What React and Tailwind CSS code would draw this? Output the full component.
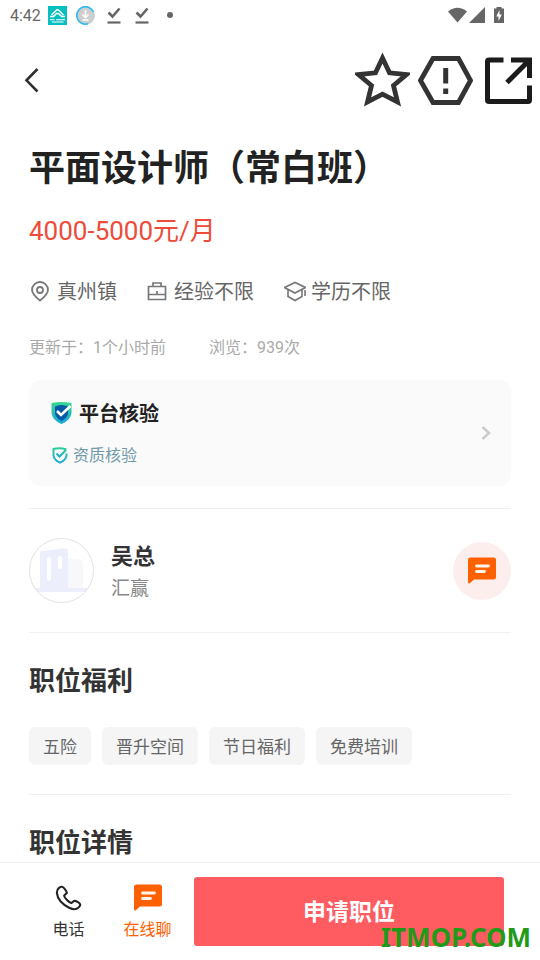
import React from 'react';

const perks = ['五险', '晋升空间', '节日福利', '免费培训'];

function ChatIcon() {
  return (
    <svg className="h-[27px] w-7" viewBox="0 0 28 27" aria-hidden="true">
      <path d="M2.5 0.5H25.5Q28 0.5 28 3V20Q28 22.500 25.500 22.500H6L1.500 26.500Q0 27 0 25V3Q0 0.500 2.500 0.500Z" fill="#ff6000" />
      <path d="M8.500 9H20.500M8.500 14.500H16.500" stroke="#fff5ee" strokeWidth="2.800" strokeLinecap="round" />
    </svg>
  );
}

function CheckUnderline() {
  return (
    <svg className="h-[18px] w-3.5" viewBox="0 0 14 18" fill="none" stroke="#666" aria-hidden="true">
      <path d="M1.500 6.500L5.500 10.500L12.500 2.500" strokeWidth="2.600" />
      <path d="M0.500 16.500H13.500" strokeWidth="2.200" />
    </svg>
  );
}

function StatusBar() {
  return (
    <div className="flex h-[30px] items-center pr-9 pl-2.5 text-[#666]">
      <span className="w-[38px] pt-0.5 text-base leading-7">4:42</span>
      <svg className="h-[19px] w-[19px]" viewBox="0 0 19 19" aria-hidden="true">
        <rect width="19" height="19" fill="#06bfbf" />
        <path d="M2 10.500H5.500L8.500 7.500H10.500L13.500 10.500H17M3.500 9L8 4.500Q9.500 3 11 4.500L15.500 9" fill="none" stroke="#fff" strokeWidth="1.500" />
        <path d="M2 13.800H6.500M8 13.800H17M4 16H15.500" stroke="#fff" strokeWidth="1.100" />
      </svg>
      <svg className="ml-[9px] h-[19px] w-[19px]" viewBox="0 0 19 19" fill="none" aria-hidden="true">
        <circle cx="9.500" cy="9.500" r="8.700" fill="#cecece" stroke="#b9cad2" strokeWidth="1.200" />
        <path d="M12 17.800A8.700 8.700 0 1 1 17.500 6" stroke="#2dbcf5" strokeWidth="1.600" />
        <path d="M9.500 4V11M6.500 8.500L9.500 11.500L12.500 8.500M6.500 14H12.500" stroke="#fff" strokeWidth="1.600" />
      </svg>
      <div className="ml-3 flex gap-3.5">
        <CheckUnderline />
        <CheckUnderline />
      </div>
      <span className="ml-[18px] h-1.5 w-1.5 rounded-full bg-[#666]" />
      <svg className="ml-auto h-[18px] w-14" viewBox="0 0 56 18" fill="#666" aria-hidden="true">
        <path d="M0 5.500Q9.500 -2 19 5.500L9.500 16.500Z" />
        <path d="M37 1V17H21Z" />
        <path d="M48.500 1H53.500V2.500H56V17H46V2.500H48.500Z" />
        <path d="M51.500 4L48.300 10.500H50.500V15L53.800 8.500H51.500Z" fill="#fff" />
      </svg>
    </div>
  );
}

function Header() {
  return (
    <header className="flex h-[100px] items-center justify-between pr-2 pl-5">
      <button type="button" aria-label="返回">
        <svg className="h-[26px] w-6" viewBox="0 0 24 26" fill="none" aria-hidden="true">
          <path d="M17.500 2L6.500 13.300L17.500 24.500" stroke="#303030" strokeWidth="2.600" />
        </svg>
      </button>
      <div className="flex items-center">
        <button type="button" aria-label="收藏" className="mr-2">
          <svg className="h-14 w-[55px]" viewBox="0 0 55 56" fill="none" aria-hidden="true">
            <path d="M27.500 6L34.500 20.800L51.500 22.500L38.500 33.500L42.500 50L27.500 42.200L12.500 50L16.500 33.500L3.500 22.500L20.500 20.800Z" stroke="#333" strokeWidth="4.800" />
          </svg>
        </button>
        <button type="button" aria-label="举报" className="mr-3">
          <svg className="h-14 w-[55px]" viewBox="0 0 55 56" aria-hidden="true">
            <path d="M15 6.500H40.500L52.500 28.500L40.500 50.500H15L2.500 28.500Z" fill="none" stroke="#333" strokeWidth="4.800" />
            <path d="M25.200 16H30.200V31.500H25.200ZM25.200 36.500H30.200V42H25.200Z" fill="#333" />
          </svg>
        </button>
        <button type="button" aria-label="分享">
          <svg className="h-14 w-[47px]" viewBox="0 0 47 56" fill="none" stroke="#1b1b1b" strokeWidth="5" aria-hidden="true">
            <path d="M18.500 8H4Q2.500 8 2.500 9.500V48Q2.500 49.500 4 49.500H43Q44.500 49.500 44.500 48V33.500" />
            <path d="M26 8H44.500V26M44 8.500L22 30.500" />
          </svg>
        </button>
      </div>
    </header>
  );
}

function Meta() {
  return (
    <div className="mt-[33px] flex flex-wrap items-center gap-x-[30px] text-xl leading-6 text-[#666]">
      <span className="flex items-center gap-1.5">
        <svg className="h-[22px] w-[22px]" viewBox="0 0 22 22" fill="none" stroke="#777" strokeWidth="1.800" aria-hidden="true">
          <path d="M11 19.500Q3 13.500 3 8.800A8 7.800 0 0 1 19 8.800Q19 13.500 11 19.500Z" />
          <circle cx="11" cy="9" r="3" />
        </svg>
        真州镇
      </span>
      <span className="flex items-center gap-[7px]">
        <svg className="h-[22px] w-5" viewBox="0 0 20 22" fill="none" stroke="#777" strokeWidth="1.700" aria-hidden="true">
          <path d="M1.500 5.500H18.500V18.500H1.500ZM6 5.500V2H14V5.500M1.500 13.500H18.500M10 10V13" />
        </svg>
        经验不限
      </span>
      <span className="flex items-center gap-[5px]">
        <svg className="h-[22px] w-[22px]" viewBox="0 0 22 22" fill="none" stroke="#777" strokeWidth="1.600" aria-hidden="true">
          <path d="M0.500 6.500L11 1.500L21.500 6.500L11 12ZM4 8.500V15.500L11 19.500L18 15.500V8.500M21 9V15" />
        </svg>
        学历不限
      </span>
    </div>
  );
}

function Verification() {
  return (
    <button type="button" className="mt-5 flex w-full items-center justify-between rounded-xl bg-[#fafafa] py-[18px] pr-5 pl-[22px] text-left">
      <span className="flex flex-col gap-[18px] pt-1">
        <span className="flex items-center gap-[7px] text-xl leading-6 font-bold text-[#222]">
          <svg className="h-6 w-[21px]" viewBox="0 0 21 24" aria-hidden="true">
            <defs>
              <linearGradient id="shield" x1="0" y1="0" x2="0" y2="1">
                <stop stopColor="#38d78e" />
                <stop offset="1" stopColor="#18a6df" />
              </linearGradient>
            </defs>
            <path d="M0.500 1Q10.500 -1 20.500 1V11Q20 18 10.500 22Q1 18 0.500 11Z" fill="url(#shield)" />
            <path d="M4 4.500Q10.500 1.500 17 4.500V11Q17 15.500 10.500 19Q4 15.500 4 11Z" fill="#0759a5" />
            <path d="M6 9L10 13L19.500 4" fill="none" stroke="#fff" strokeWidth="2.600" />
          </svg>
          平台核验
        </span>
        <span className="flex items-center gap-[5px] text-base leading-6 text-[#7199a8]">
          <svg className="ml-px h-[18px] w-4" viewBox="0 0 16 18" fill="none" strokeWidth="2" aria-hidden="true">
            <defs>
              <linearGradient id="badge" x1="0" y1="0" x2="0" y2="1">
                <stop stopColor="#2ccc9c" />
                <stop offset="1" stopColor="#1ba9d8" />
              </linearGradient>
            </defs>
            <path d="M14.500 2.500Q8 0.500 1.500 2V8.500Q2 13 8 15.700Q14 13 14.500 8.500V6.500" stroke="url(#badge)" />
            <path d="M4.500 6.500L7.500 9.500L14 3" stroke="url(#badge)" />
          </svg>
          资质核验
        </span>
      </span>
      <svg className="h-4 w-2.5" viewBox="0 0 10 16" fill="none" aria-hidden="true">
        <path d="M1.500 2L8 8L1.500 14" stroke="#ccc" strokeWidth="2.600" />
      </svg>
    </button>
  );
}

function Recruiter() {
  return (
    <section className="mt-[22px] flex items-center border-y border-[#f0f0f0] py-[29px]">
      <svg className="h-[65px] w-[65px]" viewBox="0 0 65 65" aria-hidden="true">
        <clipPath id="avatar"><circle cx="32.500" cy="32.500" r="32" /></clipPath>
        <g clipPath="url(#avatar)">
          <path d="M39 21H49Q54 22 54 26V51H39Z" fill="#f8f8fb" />
          <path d="M11 15Q11 13 13 13L36 10.500Q39 10.500 39 13V51H11Z" fill="#eceefb" />
          <path d="M0 50H65V54H0Z" fill="#eceefb" />
          <path d="M20 21V41M31 20V29" stroke="#fff" strokeWidth="4" strokeLinecap="round" />
        </g>
        <circle cx="32.500" cy="32.500" r="32" fill="none" stroke="#e2e2e2" />
      </svg>
      <div className="ml-[17px] flex-1 pt-1">
        <h2 className="text-[22px] leading-7 font-bold text-[#333]">吴总</h2>
        <p className="mt-1 text-[19px] leading-7 text-[#888]">汇赢</p>
      </div>
      <button type="button" aria-label="发消息" className="flex h-[58px] w-[58px] items-center justify-center rounded-full bg-[#fdeeee]">
        <ChatIcon />
      </button>
    </section>
  );
}

export default function App() {
  return (
    <div className="relative flex min-h-screen flex-col bg-white font-[Roboto,'Noto_Sans_CJK_SC',sans-serif]">
      <StatusBar />
      <Header />
      <main className="flex-1 px-[29px]">
        <h1 className="mt-[21px] text-4xl leading-9 font-bold text-[#222]">平面设计师（常白班）</h1>
        <p className="mt-7 text-[26px] leading-8 text-[#ee4b39]">4000-5000元/月</p>
        <Meta />
        <p className="mt-8 flex gap-[43px] text-base leading-6 text-[#aaa]">
          <span>更新于：1个小时前</span>
          <span>浏览：939次</span>
        </p>
        <Verification />
        <Recruiter />
        <section className="border-b border-[#f0f0f0] pt-8 pb-[29px]">
          <h2 className="text-[26px] leading-8 font-bold text-[#333]">职位福利</h2>
          <ul className="mt-[30px] flex flex-wrap gap-[11px]">
            {perks.map((perk) => (
              <li key={perk} className="h-[38px] rounded-md bg-[#f5f5f5] px-3.5 text-[17px] leading-10 text-[#666]">{perk}</li>
            ))}
          </ul>
        </section>
        <section className="pt-8">
          <h2 className="text-[26px] leading-8 font-bold text-[#333]">职位详情</h2>
        </section>
      </main>
      <footer className="sticky bottom-0 flex border-t border-[#f0f0f0] bg-white pt-3.5 pr-9 pb-3.5 pl-[29px]">
        <button type="button" className="flex w-[79px] flex-col items-center gap-[7px] pt-[7px] text-base leading-6 text-[#333]">
          <svg className="h-[27px] w-7" viewBox="0 0 28 27" fill="none" aria-hidden="true">
            <path d="M4 3.800C1 6 1 12 5.700 17.500C10.500 22.800 18 26.300 21.500 24.800C23.500 24 25.500 21.800 25.200 20.500C24.800 19 20.500 16.300 19 17L16.500 19C14.500 19 9 13.500 9.200 11.500L11.800 9C12 7.500 8.500 2.800 7 2.800C6 2.600 5 3.200 4 3.800Z" stroke="#222" strokeWidth="2.100" />
          </svg>
          电话
        </button>
        <button type="button" className="flex w-[79px] flex-col items-center gap-[7px] pt-[7px] text-base leading-6 text-[#ff6000]">
          <ChatIcon />
          在线聊
        </button>
        <button type="button" className="ml-[7px] h-[69px] flex-1 rounded-[3px] bg-[#ff5c62] pt-1 text-[23px] font-bold text-white">申请职位</button>
        <span className="pointer-events-none absolute right-[9px] bottom-[7px] font-['Noto_Sans',sans-serif] text-[26px] leading-8 font-bold text-[#229a18]">ITMOP.COM</span>
      </footer>
    </div>
  );
}
